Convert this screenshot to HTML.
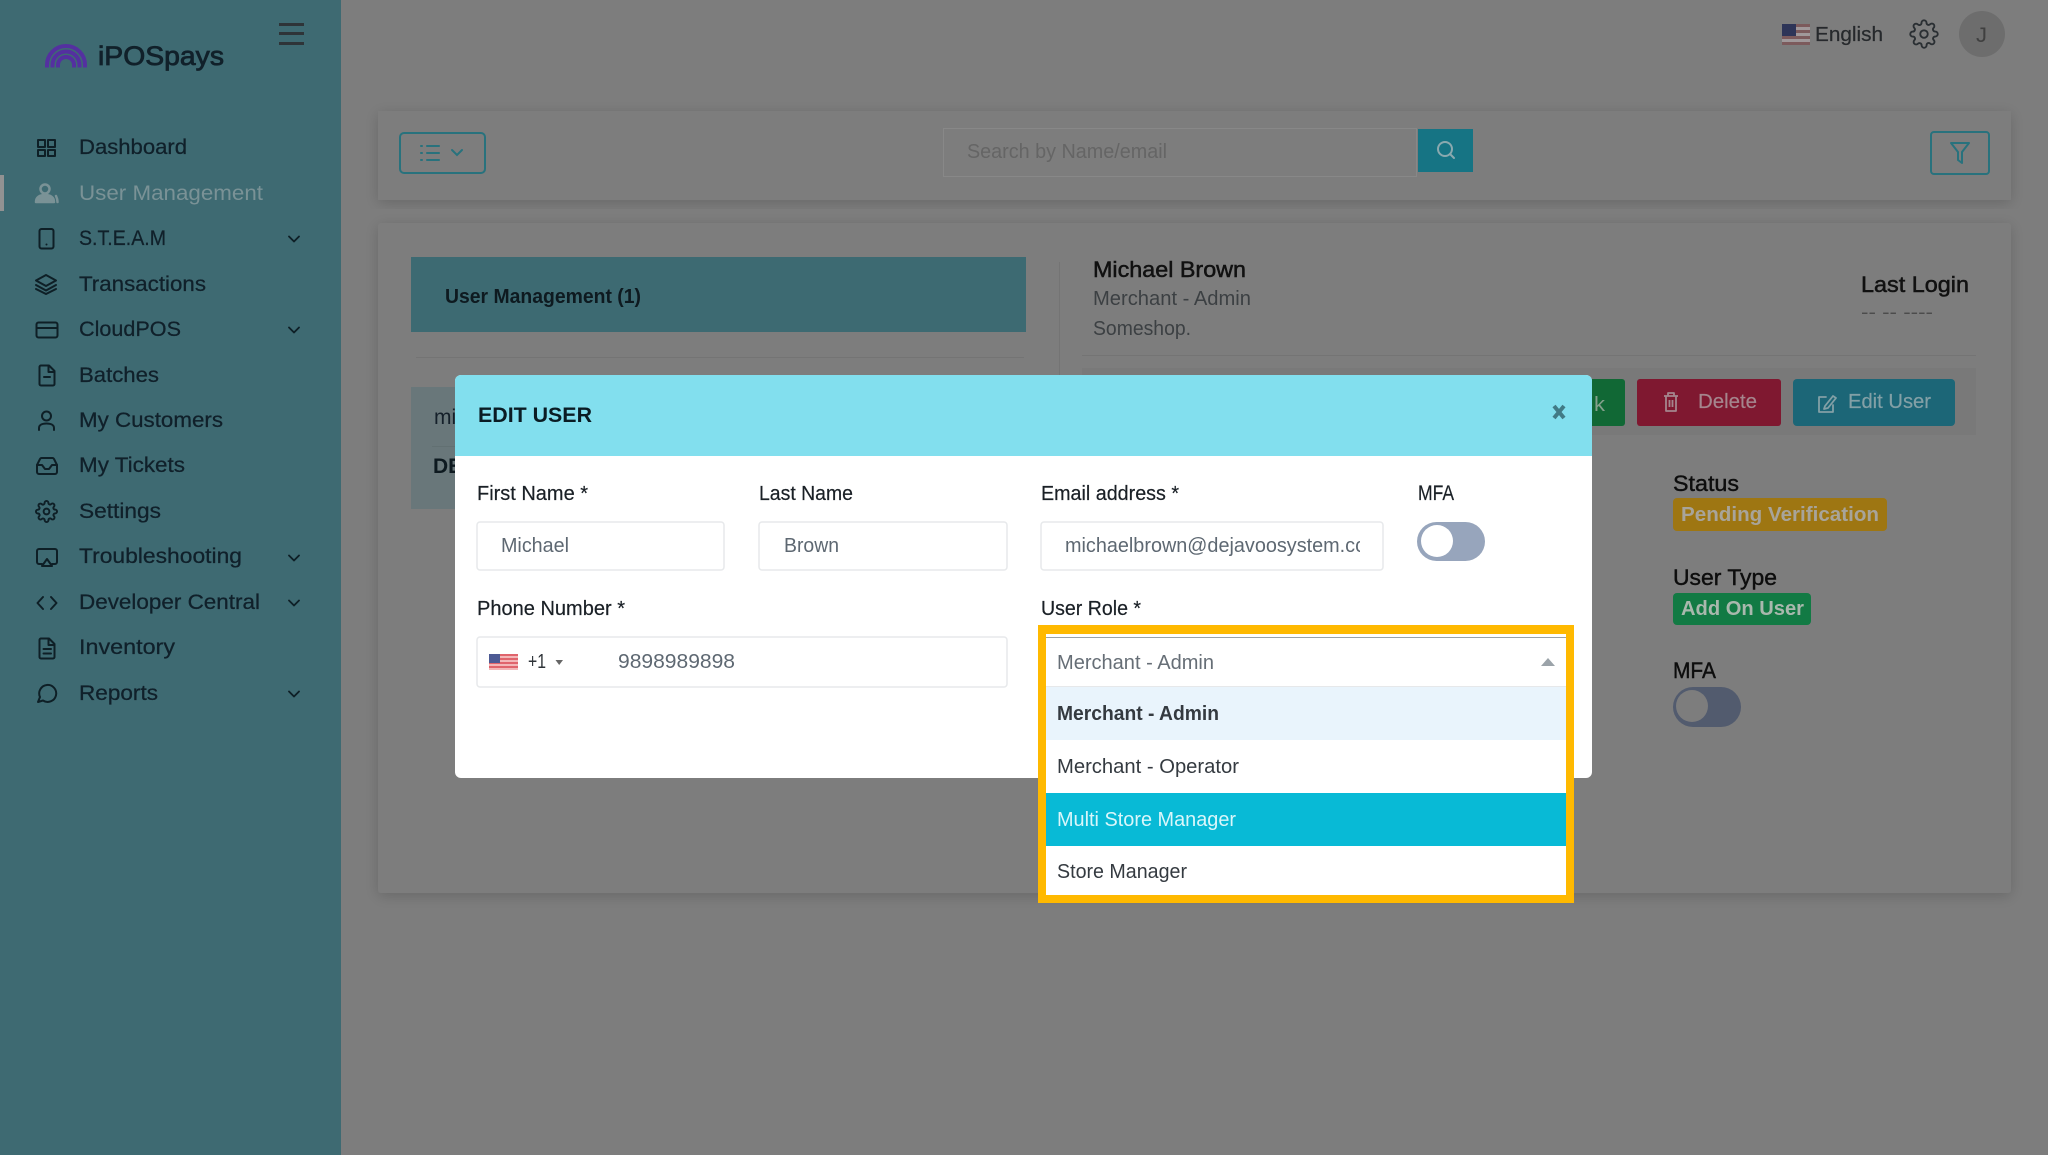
<!DOCTYPE html>
<html lang="en">
<head>
<meta charset="utf-8">
<title>iPOSpays - Edit User</title>
<style>
html,body{margin:0;padding:0;width:2048px;height:1155px;overflow:hidden;background:#7d7d7d}
svg{display:block}
text{font-family:"Liberation Sans",sans-serif;font-size:21px;fill:#10202a}
.ic{fill:none;stroke:#0e1f26;stroke-width:2;stroke-linecap:round;stroke-linejoin:round}
.s text{stroke:#10202a;stroke-width:.25}
.l{font-size:20px;fill:#1a2026;stroke:#1a2026;stroke-width:.2}
.v{font-size:20px;fill:#5e6872}
.b{font-weight:bold}
</style>
</head>
<body>
<svg width="2048" height="1155" viewBox="0 0 2048 1155" xmlns="http://www.w3.org/2000/svg">
<defs>
<filter id="sh" x="-5%" y="-10%" width="110%" height="120%"><feDropShadow dx="0" dy="3" stdDeviation="7" flood-color="#000" flood-opacity=".17"/></filter>
<clipPath id="emailclip"><rect x="1050" y="525" width="310" height="40"/></clipPath>
<clipPath id="leftclip"><rect x="405" y="380" width="50" height="135"/></clipPath>
<symbol id="gear" viewBox="0 0 24 24"><circle cx="12" cy="12" r="3"/><path d="M19.4 15a1.65 1.65 0 0 0 .33 1.82l.06.06a2 2 0 0 1 0 2.83 2 2 0 0 1-2.83 0l-.06-.06a1.65 1.65 0 0 0-1.82-.33 1.65 1.65 0 0 0-1 1.51V21a2 2 0 0 1-2 2 2 2 0 0 1-2-2v-.09A1.65 1.65 0 0 0 9 19.4a1.65 1.65 0 0 0-1.82.33l-.06.06a2 2 0 0 1-2.83 0 2 2 0 0 1 0-2.83l.06-.06a1.65 1.65 0 0 0 .33-1.82 1.65 1.65 0 0 0-1.51-1H3a2 2 0 0 1-2-2 2 2 0 0 1 2-2h.09A1.65 1.65 0 0 0 4.6 9a1.65 1.65 0 0 0-.33-1.82l-.06-.06a2 2 0 0 1 0-2.83 2 2 0 0 1 2.83 0l.06.06a1.65 1.65 0 0 0 1.82.33H9a1.65 1.65 0 0 0 1-1.51V3a2 2 0 0 1 2-2 2 2 0 0 1 2 2v.09a1.65 1.65 0 0 0 1 1.51 1.65 1.65 0 0 0 1.82-.33l.06-.06a2 2 0 0 1 2.83 0 2 2 0 0 1 0 2.83l-.06.06a1.65 1.65 0 0 0-.33 1.82V9a1.65 1.65 0 0 0 1.51 1H21a2 2 0 0 1 2 2 2 2 0 0 1-2 2h-.09a1.65 1.65 0 0 0-1.51 1z"/></symbol>
<symbol id="chev" viewBox="0 0 12 8"><path d="M1 1.5 6 6.5 11 1.5" fill="none" stroke="#0e1f26" stroke-width="1.8" stroke-linecap="round" stroke-linejoin="round"/></symbol>
</defs>

<!-- page background -->
<rect width="2048" height="1155" fill="#7d7d7d"/>

<!-- top bar -->
<g>
  <rect x="1782" y="24" width="28" height="21" fill="#7c5a5c"/>
  <g fill="#a0989a"><rect x="1782" y="27" width="28" height="3"/><rect x="1782" y="33" width="28" height="3"/><rect x="1782" y="39" width="28" height="3"/></g>
  <rect x="1782" y="24" width="14" height="12" fill="#2e3558"/>
  <text x="1815" y="41" textLength="68" lengthAdjust="spacingAndGlyphs" style="font-size:20px;fill:#26292c;stroke:#26292c;stroke-width:.2">English</text>
  <use href="#gear" x="1909" y="19" width="30" height="30" fill="none" stroke="#2a2f33" stroke-width="1.5"/>
  <circle cx="1982" cy="34" r="23" fill="#6d6d6d"/>
  <text x="1976" y="42" textLength="11" lengthAdjust="spacingAndGlyphs" style="font-size:21px;fill:#404040">J</text>
</g>

<!-- toolbar card -->
<rect x="378" y="111" width="1633" height="89" fill="#7d7d7d" filter="url(#sh)"/>
<rect x="400" y="133" width="85" height="40" rx="4" fill="none" stroke="#28727d" stroke-width="2"/>
<g fill="none" stroke="#28727d" stroke-width="2" stroke-linecap="round">
  <path d="M427 146H439M427 153H439M427 160H439" />
  <path d="M421 146h1M421 153h1M421 160h1"/>
  <path d="M452 150 457 155 462 150"/>
</g>
<rect x="943.5" y="128.500" width="473" height="48" fill="#7d7d7d" stroke="#888888"/>
<text x="967" y="158" textLength="200" lengthAdjust="spacingAndGlyphs" style="font-size:20px;fill:#656565">Search by Name/email</text>
<rect x="1418" y="129" width="55" height="43" fill="#167484"/>
<g fill="none" stroke="#8aa9af" stroke-width="2" stroke-linecap="round"><circle cx="1445" cy="149" r="7"/><path d="M1450 154 1454 158"/></g>
<rect x="1931" y="132" width="58" height="42" rx="3" fill="none" stroke="#28727d" stroke-width="2"/>
<path d="M1951 143H1969L1962 152V163L1958 160V152Z" fill="none" stroke="#28727d" stroke-width="2" stroke-linejoin="round"/>

<!-- main card -->
<rect x="378" y="223" width="1633" height="670" rx="3" fill="#7d7d7d" filter="url(#sh)"/>
<rect x="411" y="257" width="615" height="75" fill="#3d6a72"/>
<text class="b" x="445" y="303" textLength="196" lengthAdjust="spacingAndGlyphs" style="font-size:20px;fill:#0e1a20">User Management (1)</text>
<rect x="416" y="357" width="608" height="1" fill="#747474"/>
<rect x="1059" y="262" width="1" height="180" fill="#747474"/>
<rect x="411" y="387" width="60" height="122" fill="#69777a"/>
<rect x="432" y="446" width="30" height="1" fill="#627072"/>
<g clip-path="url(#leftclip)">
  <text x="434" y="424" style="font-size:21px;fill:#15202a">mi</text>
  <text class="b" x="433" y="473" style="font-size:21px;fill:#0e1a20">DE</text>
</g>

<text x="1093" y="277" textLength="153" lengthAdjust="spacingAndGlyphs" style="font-size:22px;fill:#111;stroke:#111;stroke-width:.5">Michael Brown</text>
<text x="1093" y="305" textLength="158" lengthAdjust="spacingAndGlyphs" style="font-size:20px;fill:#3c4043">Merchant - Admin</text>
<text x="1093" y="335" textLength="98" lengthAdjust="spacingAndGlyphs" style="font-size:20px;fill:#3c4043">Someshop.</text>
<text x="1861" y="292" textLength="108" lengthAdjust="spacingAndGlyphs" style="font-size:22px;fill:#111;stroke:#111;stroke-width:.5">Last Login</text>
<text x="1861" y="318" textLength="72" lengthAdjust="spacingAndGlyphs" style="font-size:18px;fill:#4c4c4c">-- -- ----</text>
<rect x="1082" y="355" width="894" height="1" fill="#747474"/>

<rect x="1082" y="368" width="894" height="67" fill="#797979"/>
<rect x="1560" y="379" width="65" height="47" rx="3" fill="#116835"/>
<text x="1594" y="411" textLength="11" lengthAdjust="spacingAndGlyphs" style="font-size:20px;fill:#84a08c">k</text>
<rect x="1637" y="379" width="144" height="47" rx="3" fill="#7f1830"/>
<g fill="none" stroke="#a5858d" stroke-width="1.8" stroke-linejoin="round"><path d="M1664 396H1678M1668 396V393H1674V396M1666 396V411H1676V396M1669.500 400V407M1672.500 400V407"/></g>
<text x="1698" y="408" textLength="59" lengthAdjust="spacingAndGlyphs" style="font-size:20px;fill:#a5858d;stroke:#a5858d;stroke-width:.2">Delete</text>
<rect x="1793" y="379" width="162" height="47" rx="4" fill="#1c6677"/>
<g fill="none" stroke="#83a0a6" stroke-width="1.8" stroke-linecap="round" stroke-linejoin="round"><path d="M1826 397H1819V412H1833V405"/><path d="M1825 406 1833 396 1836 398 1828 408 1824 409Z"/></g>
<text x="1848" y="408" textLength="83" lengthAdjust="spacingAndGlyphs" style="font-size:20px;fill:#83a0a6;stroke:#83a0a6;stroke-width:.2">Edit User</text>

<!-- right info -->
<text x="1673" y="491" textLength="66" lengthAdjust="spacingAndGlyphs" style="font-size:22px;fill:#0d0d0d;stroke:#0d0d0d;stroke-width:.4">Status</text>
<rect x="1673" y="498" width="214" height="33" rx="4" fill="#9e7612"/>
<text class="b" x="1681" y="521" textLength="198" lengthAdjust="spacingAndGlyphs" style="font-size:20px;fill:#a8a49a">Pending Verification</text>
<text x="1673" y="585" textLength="104" lengthAdjust="spacingAndGlyphs" style="font-size:22px;fill:#0d0d0d;stroke:#0d0d0d;stroke-width:.4">User Type</text>
<rect x="1673" y="593" width="138" height="32" rx="4" fill="#127a44"/>
<text class="b" x="1681" y="615" textLength="123" lengthAdjust="spacingAndGlyphs" style="font-size:20px;fill:#a9b8ad">Add On User</text>
<text x="1673" y="678" textLength="43" lengthAdjust="spacingAndGlyphs" style="font-size:22px;fill:#0d0d0d;stroke:#0d0d0d;stroke-width:.4">MFA</text>
<rect x="1673" y="687" width="68" height="40" rx="20" fill="#525b6e"/>
<circle cx="1692" cy="706" r="16" fill="#7d7d7d"/>

<!-- sidebar -->
<rect width="341" height="1155" fill="#3e6a72"/>
<g fill="none" stroke="#5430a0" stroke-width="4">
  <path d="M47 67.500V65A19 19 0 0 1 85 65V67.500"/>
  <path d="M52.500 67.500V65A13.500 13.500 0 0 1 79.500 65V67.500"/>
  <path d="M58 67.500V65A8 8 0 0 1 74 65V67.500"/>
</g>
<text x="98" y="65" textLength="126" lengthAdjust="spacingAndGlyphs" style="font-size:27px;fill:#11212a;stroke:#11212a;stroke-width:.8">iPOSpays</text>
<g fill="#2e3438"><rect x="279" y="23" width="25" height="3"/><rect x="279" y="32" width="25" height="3"/><rect x="279" y="42" width="25" height="3"/></g>
<rect x="0" y="175" width="4" height="36" fill="#929292"/>

<!-- sidebar labels -->
<g class="s">
  <text x="79" y="154" textLength="108" lengthAdjust="spacingAndGlyphs">Dashboard</text>
  <text x="79" y="200" textLength="184" lengthAdjust="spacingAndGlyphs" style="fill:#7a9296;stroke:none">User Management</text>
  <text x="79" y="245" textLength="87" lengthAdjust="spacingAndGlyphs">S.T.E.A.M</text>
  <text x="79" y="291" textLength="127" lengthAdjust="spacingAndGlyphs">Transactions</text>
  <text x="79" y="336" textLength="102" lengthAdjust="spacingAndGlyphs">CloudPOS</text>
  <text x="79" y="382" textLength="80" lengthAdjust="spacingAndGlyphs">Batches</text>
  <text x="79" y="427" textLength="144" lengthAdjust="spacingAndGlyphs">My Customers</text>
  <text x="79" y="472" textLength="106" lengthAdjust="spacingAndGlyphs">My Tickets</text>
  <text x="79" y="518" textLength="82" lengthAdjust="spacingAndGlyphs">Settings</text>
  <text x="79" y="563" textLength="163" lengthAdjust="spacingAndGlyphs">Troubleshooting</text>
  <text x="79" y="609" textLength="181" lengthAdjust="spacingAndGlyphs">Developer Central</text>
  <text x="79" y="654" textLength="96" lengthAdjust="spacingAndGlyphs">Inventory</text>
  <text x="79" y="700" textLength="79" lengthAdjust="spacingAndGlyphs">Reports</text>
</g>

<!-- sidebar icons -->
<g class="ic">
  <rect x="38" y="140" width="7" height="7" /><rect x="48" y="140" width="7" height="7"/><rect x="38" y="150" width="7" height="6"/><rect x="48" y="150" width="7" height="6"/>
  <g stroke="#7a9296" stroke-width="2.500"><circle cx="45" cy="189" r="4.500"/><path d="M36 202c0-5 4-7 9-7s9 2 9 7Z" fill="#7a9296"/><path d="M56 196c1 2 1.500 4 1.500 6"/></g>
  <rect x="39.500" y="229" width="14" height="19.500" rx="2"/><path d="M46.500 244.500h.01"/>
  <path d="M46 275 56 280.500 46 286 36 280.500Z"/><path d="M36 285 46 290.500 56 285"/><path d="M36 289 46 294 56 289"/>
  <rect x="36.500" y="322.500" width="21" height="15" rx="2"/><path d="M36.500 328H57.500"/>
  <path d="M39.500 367a1.500 1.500 0 0 1 1.500-1.500H49l5.500 5.500V384a1.500 1.500 0 0 1-1.500 1.500H41a1.500 1.500 0 0 1-1.500-1.500Z"/><path d="M48.500 366V372H54M44 377H50"/>
  <circle cx="46.500" cy="416" r="4.500"/><path d="M39 430V428c0-3 3-4.500 7.500-4.500S54 425 54 428v2"/>
  <path d="M37 465 40 459a2 2 0 0 1 2-1H52a2 2 0 0 1 2 1L57 465V472a2 2 0 0 1-2 2H39a2 2 0 0 1-2-2Z"/><path d="M37 465H42L45 469H49L52 465H57"/>
  <use href="#gear" x="35" y="500" width="23" height="23"/>
  <path d="M42 564H39a2 2 0 0 1-2-2V551a2 2 0 0 1 2-2H55a2 2 0 0 1 2 2V562a2 2 0 0 1-2 2H52"/><path d="M47 559 52 566H42Z"/>
  <path d="M43 597 37.500 603 43 609M51 597 56.500 603 51 609"/>
  <path d="M39.500 640a1.500 1.500 0 0 1 1.500-1.500H49l5.500 5.500V657a1.500 1.500 0 0 1-1.500 1.500H41a1.500 1.500 0 0 1-1.500-1.500Z"/><path d="M48.500 639V645H54M43.500 649H51M43.500 653.500H51"/>
  <path d="M38 702 40 697a8.500 8.500 0 1 1 3 3.500Z"/>
</g>

<!-- sidebar chevrons -->
<use href="#chev" x="288" y="235" width="12" height="8"/>
<use href="#chev" x="288" y="326" width="12" height="8"/>
<use href="#chev" x="288" y="554" width="12" height="8"/>
<use href="#chev" x="288" y="599" width="12" height="8"/>
<use href="#chev" x="288" y="690" width="12" height="8"/>

<!-- modal -->
<rect x="455" y="375" width="1137" height="403" rx="6" fill="#fff"/>
<path d="M455 456V381a6 6 0 0 1 6-6H1586a6 6 0 0 1 6 6V456Z" fill="#82dfee"/>
<text x="478" y="422" textLength="114" lengthAdjust="spacingAndGlyphs" style="font-size:21px;font-weight:bold;fill:#0a1c24">EDIT USER</text>
<path d="M1554 406 1564 418M1564 406 1554 418" stroke="#417a85" stroke-width="4" fill="none"/>

<text class="l" x="477" y="500" textLength="111" lengthAdjust="spacingAndGlyphs">First Name *</text>
<text class="l" x="759" y="500" textLength="94" lengthAdjust="spacingAndGlyphs">Last Name</text>
<text class="l" x="1041" y="500" textLength="138" lengthAdjust="spacingAndGlyphs">Email address *</text>
<text class="l" x="1418" y="500" textLength="36" lengthAdjust="spacingAndGlyphs" style="font-size:21px">MFA</text>

<g fill="#fff" stroke="#e7e9eb" stroke-width="1.500">
  <rect x="477" y="522" width="247" height="48" rx="3"/>
  <rect x="759" y="522" width="248" height="48" rx="3"/>
  <rect x="1041" y="522" width="342" height="48" rx="3"/>
  <rect x="477" y="637" width="530" height="50" rx="3"/>
</g>
<text class="v" x="501" y="552" textLength="68" lengthAdjust="spacingAndGlyphs">Michael</text>
<text class="v" x="784" y="552" textLength="55" lengthAdjust="spacingAndGlyphs">Brown</text>
<g clip-path="url(#emailclip)"><text class="v" x="1065" y="552" textLength="300" lengthAdjust="spacingAndGlyphs">michaelbrown@dejavoosystem.cc</text></g>

<rect x="1417" y="522" width="68" height="39" rx="19.500" fill="#97a5bc"/>
<circle cx="1437" cy="541" r="16" fill="#fff"/>

<text class="l" x="477" y="615" textLength="148" lengthAdjust="spacingAndGlyphs">Phone Number *</text>
<text class="l" x="1041" y="615" textLength="100" lengthAdjust="spacingAndGlyphs">User Role *</text>

<rect x="489" y="654" width="29" height="16" fill="#f3b7b8"/>
<g fill="#e0646c"><rect x="489" y="654" width="29" height="2"/><rect x="489" y="658" width="29" height="2"/><rect x="489" y="662" width="29" height="2"/><rect x="489" y="666" width="29" height="2"/></g>
<rect x="489" y="654" width="11" height="9" fill="#4d5a94"/>
<text x="528" y="668" textLength="18" lengthAdjust="spacingAndGlyphs" style="font-size:20px;fill:#2e3338">+1</text>
<path d="M555.500 660H563L559.200 665Z" fill="#666"/>
<text class="v" x="618" y="668" textLength="117" lengthAdjust="spacingAndGlyphs">9898989898</text>

<!-- highlighted dropdown -->
<rect x="1038" y="625" width="536" height="278" fill="#ffb900"/>
<rect x="1046" y="634" width="520" height="261" fill="#fff"/>
<rect x="1046" y="637" width="520" height="1" fill="#9aa2a8"/>
<rect x="1046" y="686" width="520" height="1" fill="#e6e8ea"/>
<text x="1057" y="669" textLength="157" lengthAdjust="spacingAndGlyphs" style="font-size:20px;fill:#666e76">Merchant - Admin</text>
<path d="M1541 666H1555L1548 658Z" fill="#9ba3a9"/>
<rect x="1046" y="687" width="520" height="53" fill="#e9f4fc"/>
<text class="b" x="1057" y="720" textLength="162" lengthAdjust="spacingAndGlyphs" style="font-size:20px;fill:#343a40">Merchant - Admin</text>
<text x="1057" y="773" textLength="182" lengthAdjust="spacingAndGlyphs" style="font-size:20px;fill:#343a40">Merchant - Operator</text>
<rect x="1046" y="793" width="520" height="53" fill="#08bad6"/>
<text x="1057" y="826" textLength="179" lengthAdjust="spacingAndGlyphs" style="font-size:20px;fill:#d9f6fa">Multi Store Manager</text>
<text x="1057" y="878" textLength="130" lengthAdjust="spacingAndGlyphs" style="font-size:20px;fill:#343a40">Store Manager</text>
</svg>
</body>
</html>
